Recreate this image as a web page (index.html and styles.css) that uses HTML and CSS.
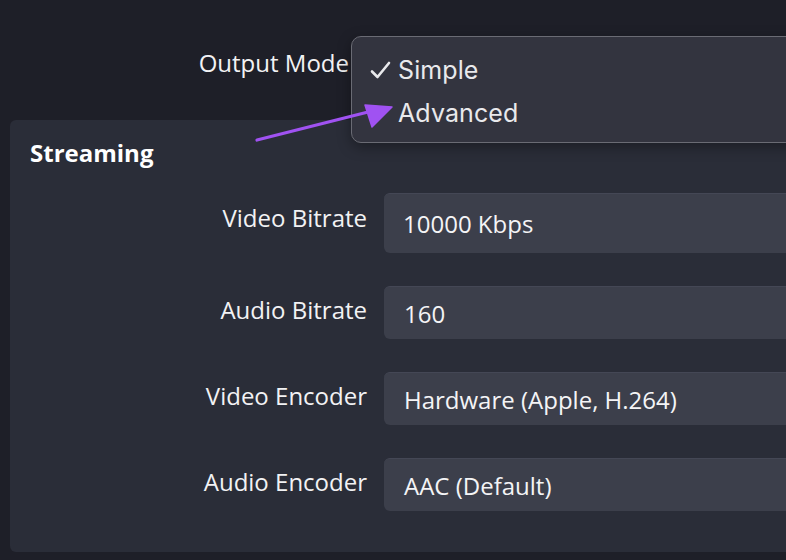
FILE: index.html
```html
<!DOCTYPE html>
<html>
<head>
<meta charset="utf-8">
<link rel="stylesheet" href="styles.css">
</head>
<body>
<div class="page">
  <header class="top">
    <div class="mode-label">Output Mode</div>
    <div class="menu">
      <div class="menu-item"><span class="check"><svg width="21" height="18" viewBox="0 0 21 18"><path d="M2 10.5 L7.5 16 L19 2" fill="none" stroke="#e9e9ec" stroke-width="2.6" stroke-linecap="round" stroke-linejoin="round"/></svg></span>Simple</div>
      <div class="menu-item"><span class="check"></span>Advanced</div>
    </div>
  </header>
  <section class="panel">
    <h2 class="panel-title">Streaming</h2>
    <div class="rows">
      <div class="label first">Video Bitrate</div>
      <div class="field tall">10000 Kbps</div>
      <div class="label">Audio Bitrate</div>
      <div class="field">160</div>
      <div class="label">Video Encoder</div>
      <div class="field">Hardware (Apple, H.264)</div>
      <div class="label">Audio Encoder</div>
      <div class="field">AAC (Default)</div>
    </div>
  </section>
  <svg class="arrow" width="150" height="60" viewBox="0 0 150 60">
    <line x1="7" y1="45" x2="126" y2="15" stroke="#a052f2" stroke-width="3.2" stroke-linecap="round"/>
    <polygon points="142,12 115,10 122,32" fill="#a052f2" stroke="#a052f2" stroke-width="1.5" stroke-linejoin="round"/>
  </svg>
</div>
</body>
</html>
```

FILE: styles.css
```css
html, body {
  margin: 0;
  padding: 0;
  background: #1e1f28;
  width: 786px;
  height: 560px;
  overflow: hidden;
}

.page {
  position: relative;
  width: 786px;
  height: 560px;
  font-family: "Open Sans", "DejaVu Sans", sans-serif;
  color: #f2f2f4;
}

.top {
  position: relative;
  height: 120px;
}

.mode-label {
  width: 349px;
  text-align: right;
  padding-top: 47px;
  font-size: 24px;
  line-height: 32px;
}

.menu {
  position: absolute;
  left: 351px;
  top: 36px;
  width: 460px;
  height: 107px;
  background: #33343f;
  border: 1.5px solid #6a6b74;
  border-radius: 10px;
  box-shadow: 0 4px 14px rgba(0, 0, 0, 0.35);
  z-index: 2;
  padding-top: 11px;
  box-sizing: border-box;
  font-family: "Inter", "Noto Sans", sans-serif;
  color: #e9e9ec;
}

.menu-item {
  display: flex;
  align-items: center;
  height: 43px;
  font-size: 25px;
  letter-spacing: 0.1px;
}

.check {
  display: flex;
  align-items: center;
  width: 28px;
  padding-left: 18px;
  height: 43px;
}

.panel {
  margin-left: 10px;
  width: 800px;
  height: 432px;
  box-sizing: border-box;
  background: #2a2d38;
  border-radius: 6px;
  padding-top: 17px;
}

.panel-title {
  margin: 0 0 24px 20px;
  font-size: 24px;
  line-height: 32px;
  font-weight: 700;
  color: #ffffff;
}

.rows {
  display: grid;
  grid-template-columns: 357px 1fr;
  column-gap: 17px;
  row-gap: 33px;
  align-items: center;
}

.label {
  text-align: right;
  font-size: 24px;
  line-height: 32px;
  padding-bottom: 5px;
}

.label.first {
  padding-bottom: 10px;
}

.field {
  height: 53px;
  display: flex;
  align-items: center;
  padding-left: 20px;
  background: #3c3f4b;
  border-top: 1px solid #444755;
  border-radius: 6px 0 0 6px;
  box-sizing: border-box;
  font-size: 24px;
  color: #f4f4f6;
}

.field.tall {
  height: 60px;
  padding-left: 19px;
}

.arrow {
  position: absolute;
  left: 250px;
  top: 95px;
  z-index: 3;
}
```
